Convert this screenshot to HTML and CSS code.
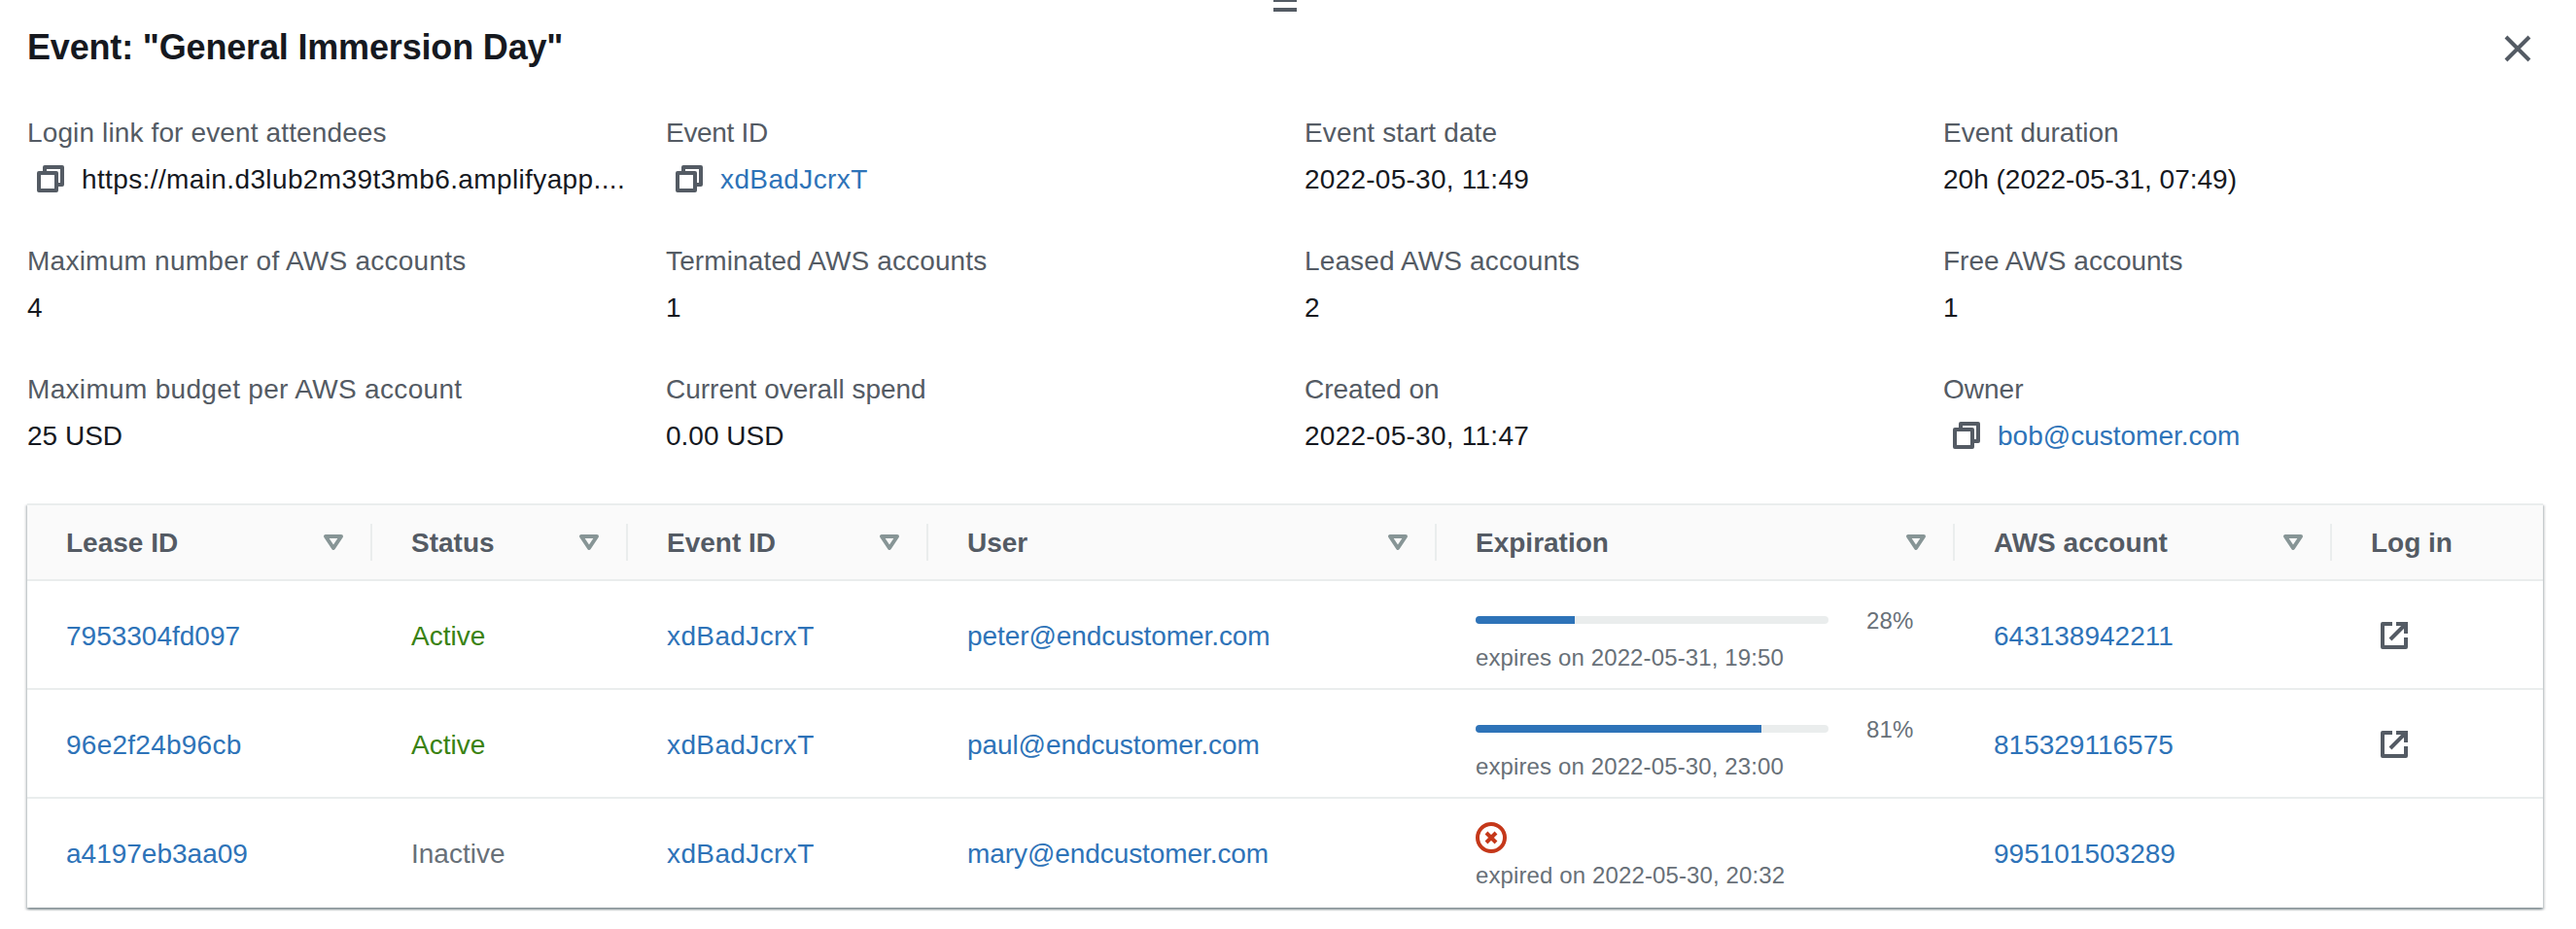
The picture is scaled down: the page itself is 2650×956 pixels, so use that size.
FILE: index.html
```html
<!DOCTYPE html>
<html lang="en">
<head>
<meta charset="utf-8">
<title>Event: "General Immersion Day"</title>
<link rel="stylesheet" href="styles.css">
</head>
<body>
<svg class="sprite" width="0" height="0">
  <symbol id="copy" viewBox="0 0 32 32"><path d="M4 10h18v18H4zM10 8V4h18v18h-4" fill="none" stroke="#545b64" stroke-width="4" stroke-linejoin="round"/></symbol>
  <symbol id="sort" viewBox="0 0 32 32"><path d="M8 10h16L16 22z" fill="none" stroke="#879596" stroke-width="4" stroke-linejoin="round"/></symbol>
  <symbol id="open" viewBox="0 0 32 32"><path d="M14 4H4v24h24V18" fill="none" stroke="#545b64" stroke-width="4" stroke-linejoin="round"/><path d="M18 4h10v10M28 4L12 20" fill="none" stroke="#545b64" stroke-width="4"/></symbol>
</svg>
<div class="handle"><span></span><span></span></div>
<main class="panel">
  <header class="top">
    <h1 class="title">Event: "General Immersion Day"</h1>
    <svg class="close" viewBox="0 0 32 32"><path d="M4 4L28 28M28 4L4 28" stroke="#545b64" stroke-width="4"/></svg>
  </header>
  <section class="facts">
    <div><div class="label ls-1">Login link for event attendees</div><div class="value"><svg class="icon copy"><use href="#copy"/></svg><span class="ls-4">https://main.d3lub2m39t3mb6.amplifyapp....</span></div></div>
    <div><div class="label ls-tight">Event ID</div><div class="value"><svg class="icon copy"><use href="#copy"/></svg><a class="ls-4">xdBadJcrxT</a></div></div>
    <div><div class="label ls-1">Event start date</div><div class="value ls-2">2022-05-30, 11:49</div></div>
    <div><div class="label">Event duration</div><div class="value">20h (2022-05-31, 07:49)</div></div>
    <div><div class="label ls-2">Maximum number of AWS accounts</div><div class="value">4</div></div>
    <div><div class="label ls-1">Terminated AWS accounts</div><div class="value">1</div></div>
    <div><div class="label ls-1">Leased AWS accounts</div><div class="value">2</div></div>
    <div><div class="label">Free AWS accounts</div><div class="value">1</div></div>
    <div><div class="label ls-3">Maximum budget per AWS account</div><div class="value">25 USD</div></div>
    <div><div class="label">Current overall spend</div><div class="value">0.00 USD</div></div>
    <div><div class="label">Created on</div><div class="value ls-2">2022-05-30, 11:47</div></div>
    <div><div class="label">Owner</div><div class="value"><svg class="icon copy"><use href="#copy"/></svg><a>bob@customer.com</a></div></div>
  </section>
  <section class="table">
    <div class="row head">
      <div class="th"><span>Lease ID</span><svg class="icon"><use href="#sort"/></svg></div>
      <div class="th"><span>Status</span><svg class="icon"><use href="#sort"/></svg></div>
      <div class="th"><span>Event ID</span><svg class="icon"><use href="#sort"/></svg></div>
      <div class="th"><span>User</span><svg class="icon"><use href="#sort"/></svg></div>
      <div class="th"><span>Expiration</span><svg class="icon"><use href="#sort"/></svg></div>
      <div class="th"><span>AWS account</span><svg class="icon"><use href="#sort"/></svg></div>
      <div class="th"><span>Log in</span></div>
    </div>
    <div class="row">
      <div class="td"><a>7953304fd097</a></div>
      <div class="td active">Active</div>
      <div class="td"><a class="ls-4">xdBadJcrxT</a></div>
      <div class="td"><a class="ls-mail">peter@endcustomer.com</a></div>
      <div class="td expiry"><div class="progress"><div class="bar"><div class="fill" style="width:28%"></div></div><span>28%</span></div><div class="note">expires on 2022-05-31, 19:50</div></div>
      <div class="td"><a>643138942211</a></div>
      <div class="td link"><svg class="icon open"><use href="#open"/></svg></div>
    </div>
    <div class="row">
      <div class="td"><a class="ls-2">96e2f24b96cb</a></div>
      <div class="td active">Active</div>
      <div class="td"><a class="ls-4">xdBadJcrxT</a></div>
      <div class="td"><a class="ls-mail">paul@endcustomer.com</a></div>
      <div class="td expiry"><div class="progress"><div class="bar"><div class="fill" style="width:81%"></div></div><span>81%</span></div><div class="note">expires on 2022-05-30, 23:00</div></div>
      <div class="td"><a>815329116575</a></div>
      <div class="td link"><svg class="icon open"><use href="#open"/></svg></div>
    </div>
    <div class="row">
      <div class="td"><a>a4197eb3aa09</a></div>
      <div class="td inactive">Inactive</div>
      <div class="td"><a class="ls-4">xdBadJcrxT</a></div>
      <div class="td"><a class="ls-mail">mary@endcustomer.com</a></div>
      <div class="td expiry"><div class="progress"><svg class="icon" viewBox="0 0 32 32"><circle cx="16" cy="16" r="14" fill="none" stroke="#c5381a" stroke-width="4"/><path d="M11 11L21 21M21 11L11 21" stroke="#c5381a" stroke-width="4"/></svg></div><div class="note">expired on 2022-05-30, 20:32</div></div>
      <div class="td"><a>995101503289</a></div>
      <div class="td"></div>
    </div>
  </section>
</main>
</body>
</html>
```

FILE: styles.css
```css
* { box-sizing: border-box; }
body {
  margin: 0;
  height: 956px;
  overflow: hidden;
  background: #fff;
  color: #16191f;
  font: 28px/44px "Liberation Sans", Arial, sans-serif;
}
.sprite { position: absolute; }
a { color: #2e73b8; }
.icon { width: 32px; height: 32px; flex: none; }
.ls-tight { letter-spacing: -.3px; }
.ls-mail { letter-spacing: -.08px; }
.ls-1 { letter-spacing: .13px; }
.ls-2 { letter-spacing: .25px; }
.ls-3 { letter-spacing: .32px; }
.ls-4 { letter-spacing: .38px; }
.handle { height: 12px; width: 24px; margin: 0 auto 0 1310px; display: flex; flex-direction: column; gap: 6px; }
.handle span { height: 2px; background: #545b64; }
.handle span + span { height: 4px; }
.panel { padding: 0 34px 0 28px; }
.top { display: flex; justify-content: space-between; height: 102px; padding-top: 14px; }
.title { margin: 0; font-size: 36px; line-height: 44px; font-weight: 700; letter-spacing: -.17px; white-space: nowrap; padding-top: 1px; }
.close { width: 32px; height: 32px; margin: 8px 10px 0 0; }
.facts { display: grid; grid-template-columns: repeat(4, 657px); grid-auto-rows: 132px; height: 404px; padding-top: 1px; white-space: nowrap; }
.label { color: #545b64; height: 44px; }
.value { display: flex; height: 44px; margin-top: 4px; align-items: center; }
.copy { margin: -2px 16px 0 8px; }
.table { width: 2588px; background: #fff; border-top: 2px solid #eaeded; box-shadow: 0 2px 2px 0 rgba(0, 28, 36, .3), 2px 2px 2px 0 rgba(0, 28, 36, .15), -2px 2px 2px 0 rgba(0, 28, 36, .15); }
.row { display: grid; grid-template-columns: 355px 263px 309px 523px 533px 388px 1fr; height: 112px; border-bottom: 2px solid #eaeded; white-space: nowrap; }
.row:last-child { border-bottom-color: transparent; }
.head { height: 78px; background: #fafafa; color: #545b64; font-weight: 700; }
.th { display: flex; align-items: center; justify-content: space-between; height: 38px; margin-top: 19px; padding: 0 22px 0 40px; border-right: 2px solid #eaeded; }
.th span { padding-top: 2px; }
.th:last-child { border: 0; }
.td { padding: 3px 0 0 40px; display: flex; align-items: center; }
.active { color: #3a8212; }
.inactive { color: #687078; }
.link { padding-top: 2px; }
.open { margin-left: 8px; }
.expiry { flex-direction: column; align-items: flex-start; padding-top: 20px; font-size: 24px; color: #687078; letter-spacing: .12px; }
.progress { display: flex; align-items: center; height: 40px; line-height: 40px; }
.progress span { padding-top: 2px; }
.bar { width: 363px; height: 8px; border-radius: 4px; overflow: hidden; background: #eaeded; margin-right: 39px; }
.fill { height: 100%; background: #2e73b8; }
.note { height: 36px; line-height: 36px; margin-top: 1px; }
```
